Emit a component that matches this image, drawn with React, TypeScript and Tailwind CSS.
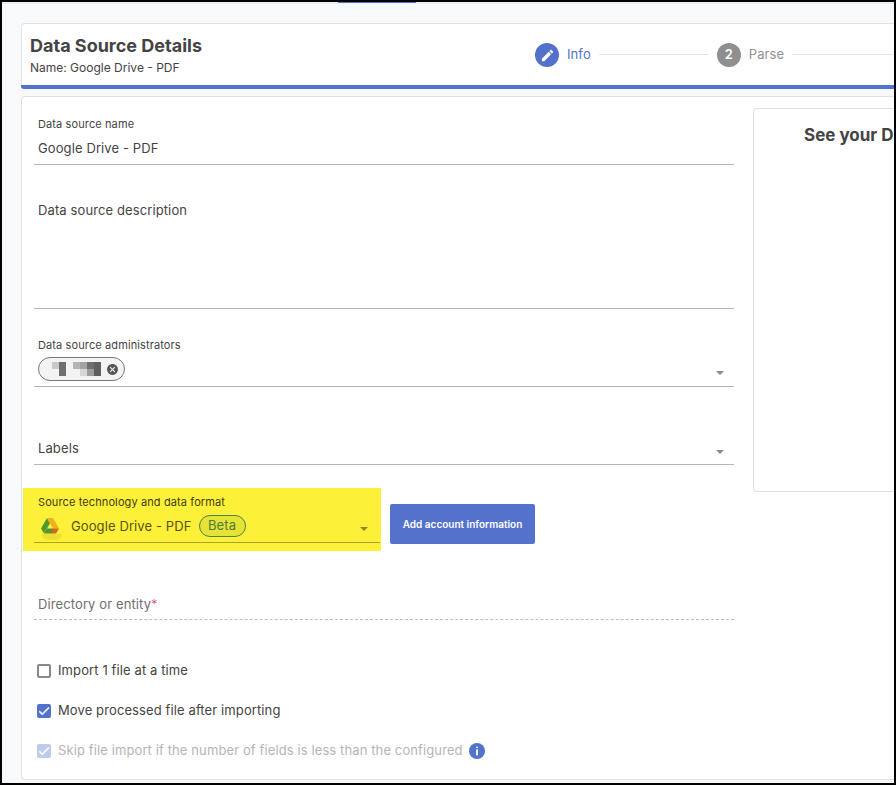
const DriveLogo = () => (
  <svg viewBox="0 0 18 16" className="w-[18px] h-[16px]">
    <path d="M6 0l3 5.2-6 10.3-3-5z" fill="#4f9a2e" />
    <path d="M6 0h6l6 10.5h-6z" fill="#edb21f" />
    <path d="M6 10.5h7l-1.5 5H3z" fill="#5d8f33" />
    <path d="M12 10.5h6l-3 5h-4z" fill="#d9651f" />
  </svg>
);

const Caret = ({ className }: { className: string }) => (
  <span className={`border-x-[4px] border-t-[4px] border-x-transparent ${className}`} />
);

const CheckMark = () => (
  <svg viewBox="0 0 24 24" className="w-[14px] h-[14px]" fill="white" stroke="white" strokeWidth={1}>
    <path d="M9 16.17L4.83 12l-1.42 1.41L9 19 21 7l-1.41-1.41z" />
  </svg>
);

const Pixels = () => (
  <div className="flex items-start h-[14px] w-[49px]">
    <div className="w-[7px] h-[7px] bg-[#c9c9c9]" />
    <div className="w-[7px] h-[14px] bg-[#6f6f6f]" />
    <div className="w-[7px]" />
    <div className="w-[7px] h-[7px] bg-[#b4b4b4]" />
    <div className="w-[7px] h-[14px] bg-[linear-gradient(#a3a3a3_50%,#d6d6d6_50%)]" />
    <div className="w-[7px] h-[14px] bg-[linear-gradient(#6f6f6f_50%,#9d9d9d_50%)]" />
    <div className="w-[7px] h-[14px] bg-[#5f5f5f]" />
  </div>
);

const App = () => {
  return (
    <div
      className="w-[896px] h-[785px] overflow-hidden bg-black p-[2px] text-[#444444]"
      style={{ fontFamily: "Inter, 'Liberation Sans', sans-serif" }}
    >
      <div className="w-[892px] h-[781px] overflow-hidden bg-[#f8f9fb] relative">
        {/* active tab hint at top */}
        <div className="absolute left-[336px] top-0 w-[78px] h-px bg-[#5272cc]" />
        <div className="h-[2px] bg-[#eef0f3]" />

        <div className="w-[1100px] ml-[19px] mt-[19px]">
          {/* Header card */}
          <div className="h-[66px] rounded-t-[4px] rounded-b-[3px] border border-[#dfe1e5] border-b-0 bg-white flex relative">
            <div className="pl-[8px] pt-[12px] w-[513px]">
              <h1 className="text-[18px] leading-[20px] font-bold">Data Source Details</h1>
              <p className="text-[12px] leading-[14px] mt-[5px]">Name: Google Drive - PDF</p>
            </div>
            <div className="flex items-center h-[24px] mt-[19px]">
              <div className="w-[24px] h-[24px] rounded-full bg-[#5272cc] flex items-center justify-center">
                <svg viewBox="0 0 24 24" className="w-[15px] h-[15px]" fill="white">
                  <path d="M3 17.25V21h3.75L17.81 9.94l-3.75-3.75L3 17.25zM20.71 7.04c.39-.39.39-1.02 0-1.41l-2.34-2.34c-.39-.39-1.02-.39-1.41 0l-1.83 1.83 3.75 3.75 1.83-1.83z" />
                </svg>
              </div>
              <span className="text-[13px] ml-[8px] tracking-[0.1px] text-[#5272cc]">Info</span>
              <div className="w-[109px] h-px bg-[#e4e4e4] ml-[8px] mb-[1px]" />
              <div className="w-[24px] h-[24px] ml-[9px] rounded-full bg-[#8f8f8f] flex items-center justify-center text-white text-[13px] font-semibold">
                2
              </div>
              <span className="text-[13px] ml-[8px] tracking-[0.1px] text-[#929292]">Parse</span>
              <div className="w-[110px] h-px bg-[#e4e4e4] ml-[8px] mb-[1px]" />
            </div>
            <div className="absolute left-[-1px] right-0 bottom-0 h-[4px] rounded-b-[3px] bg-[#5272cc]" />
          </div>

          {/* Form card */}
          <div className="mt-[7px] h-[684px] rounded-[4px] border border-[#dfe1e5] bg-white flex items-start tracking-[0.11px]">
            <div className="w-[700px] ml-[12px] shrink-0">
              {/* Name */}
              <div className="h-[68px] pt-[21px] border-b border-[#b5b5b5] px-[4px]">
                <div className="text-[11px] leading-[13px]">Data source name</div>
                <div className="text-[13px] leading-[16px] mt-[9px]">Google Drive - PDF</div>
              </div>

              {/* Description */}
              <div className="h-[144px] pt-[37px] border-b border-[#b5b5b5] px-[4px]">
                <div className="text-[13px] leading-[16px]">Data source description</div>
              </div>

              {/* Administrators */}
              <div className="h-[78px] pt-[30px] border-b border-[#b5b5b5] pl-[4px] pr-[14px] relative">
                <div className="text-[11px] leading-[13px]">Data source administrators</div>
                <div className="mt-[5px] w-[87px] h-[24px] rounded-full border border-[#777777] bg-[#f3f3f3] flex items-center pl-[13px]">
                  <Pixels />
                  <svg viewBox="0 0 24 24" className="w-[13px] h-[13px] ml-[5px]" fill="#555555">
                    <path d="M12 2C6.47 2 2 6.47 2 12s4.47 10 10 10 10-4.47 10-10S17.53 2 12 2zm5 13.59L15.59 17 12 13.41 8.41 17 7 15.59 10.59 12 7 8.41 8.41 7 12 10.59 15.59 7 17 8.41 13.41 12 17 15.59z" />
                  </svg>
                </div>
                <Caret className="absolute right-[10px] bottom-[11px] border-t-[#8a8a8a]" />
              </div>

              {/* Labels */}
              <div className="h-[78px] pt-[53px] border-b border-[#b5b5b5] px-[4px] relative">
                <div className="text-[13px] leading-[16px]">Labels</div>
                <Caret className="absolute right-[10px] bottom-[10px] border-t-[#8a8a8a]" />
              </div>

              {/* Source technology */}
              <div className="mt-[23px] flex items-start">
                <div className="-ml-[11px] w-[358px] h-[63px] pl-[11px] pr-px bg-[#fdf038]">
                  <div className="h-[55px] border-b border-[#aaa32b] relative">
                    <div className="pl-[4px] pt-[8px] text-[11px] leading-[13px] text-[#3f3d16]">Source technology and data format</div>
                    <div className="flex items-center mt-[6px] pl-[7px] text-[#56541a]">
                      <DriveLogo />
                      <span className="text-[13px] leading-[16px] ml-[12px]">Google Drive - PDF</span>
                      <span className="ml-[7px] w-[47px] h-[22px] rounded-full border border-[#4f8147] bg-[#e6e337] flex items-center justify-center text-[13px] text-[#4f7a3a]">
                        Beta
                      </span>
                    </div>
                    <div className="absolute left-[8px] top-[46px] w-[20px] h-[6px] rounded-b-full bg-[#ebe032]" />
                    <Caret className="absolute right-[12px] bottom-[11px] border-t-[#8d8728]" />
                  </div>
                </div>
                <button className="ml-[9px] mt-[16px] w-[145px] h-[40px] rounded-[2px] bg-[#5272cc] text-white text-[10px] font-semibold tracking-normal">
                  Add account information
                </button>
              </div>

              {/* Directory */}
              <div className="h-[69px] pt-[45px] border-b border-dashed border-[#bdbdbd] px-[4px]">
                <div className="text-[13px] leading-[16px] text-[#6f6f6f]">
                  Directory or entity<span className="text-[#d34f4f] font-light">*</span>
                </div>
              </div>

              {/* Checkboxes */}
              <div className="mt-[43px] flex items-center h-[16px] pl-[3px]">
                <span className="w-[14px] h-[14px] rounded-[2px] border-2 border-[#8a8a8a] bg-white" />
                <span className="text-[13px] ml-[7px]">Import 1 file at a time</span>
              </div>
              <div className="mt-[24px] flex items-center h-[16px] pl-[3px]">
                <span className="w-[14px] h-[14px] rounded-[2px] bg-[#5272cc] flex items-center justify-center">
                  <CheckMark />
                </span>
                <span className="text-[13px] ml-[7px]">Move processed file after importing</span>
              </div>
              <div className="mt-[24px] flex items-center h-[16px] pl-[3px]">
                <span className="w-[14px] h-[14px] rounded-[2px] bg-[#bfcbec] flex items-center justify-center">
                  <CheckMark />
                </span>
                <span className="text-[13px] ml-[7px] text-[#b5b5b5]">Skip file import if the number of fields is less than the configured</span>
                <svg viewBox="0 0 16 16" className="ml-[6px] w-[16px] h-[16px]">
                  <circle cx="8" cy="8" r="8" fill="#5272cc" />
                  <rect x="7.1" y="3.4" width="1.8" height="1.8" rx="0.9" fill="white" />
                  <rect x="7.1" y="6.4" width="1.8" height="6" fill="white" />
                </svg>
              </div>
            </div>

            {/* Side panel */}
            <div className="ml-[19px] mt-[11px] w-[300px] h-[384px] rounded-[4px] border border-[#e0e0e0] pt-[15px] pl-[50px]">
              <div className="text-[17px] leading-[22px] font-bold whitespace-nowrap tracking-normal">See your Data</div>
            </div>
          </div>
        </div>
      </div>
    </div>
  );
};

export default App;
